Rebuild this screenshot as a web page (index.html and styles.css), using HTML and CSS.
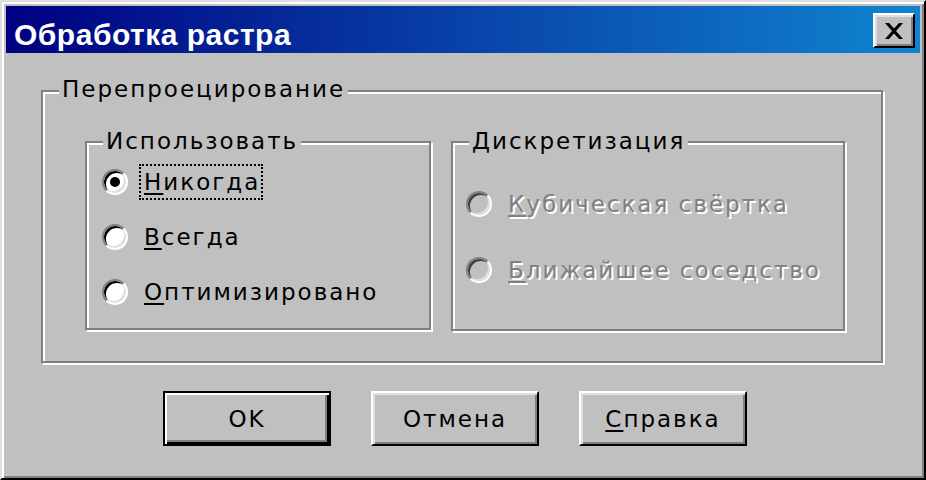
FILE: index.html
```html
<!DOCTYPE html>
<html lang="ru">
<head>
  <meta charset="UTF-8" />
  <meta name="viewport" content="width=device-width, initial-scale=1.0"/>
  <title>Обработка растра</title>
  <link rel="stylesheet" href="styles.css">
</head>
<body>
  <div class="window">
    <div class="titlebar">
      <span class="title">Обработка растра</span>
      <button class="close" aria-label="Закрыть">
        <svg width="18" height="16" viewBox="0 0 18 16">
          <polygon points="0,0 4,0 9,5.5 14,0 18,0 11,8 18,16 14,16 9,10.5 4,16 0,16 7,8" fill="#000"/>
        </svg>
      </button>
    </div>

    <div class="content">
      <div class="group outer">
        <span class="legend">Перепроецирование</span>

        <div class="group use">
          <span class="legend">Использовать</span>
          <label class="option">
            <span class="radio checked"><span class="dot"></span></span>
            <span class="caption focused"><u>Н</u>икогда</span>
          </label>
          <label class="option">
            <span class="radio"></span>
            <span class="caption"><u>В</u>сегда</span>
          </label>
          <label class="option">
            <span class="radio"></span>
            <span class="caption"><u>О</u>птимизировано</span>
          </label>
        </div>

        <div class="group sampling">
          <span class="legend">Дискретизация</span>
          <label class="option disabled">
            <span class="radio"></span>
            <span class="caption"><u>К</u>убическая свёртка</span>
          </label>
          <label class="option disabled">
            <span class="radio"></span>
            <span class="caption"><u>Б</u>лижайшее соседство</span>
          </label>
        </div>
      </div>

      <div class="actions">
        <button class="btn default">OK</button>
        <button class="btn">Отмена</button>
        <button class="btn"><u>С</u>правка</button>
      </div>
    </div>
  </div>
</body>
</html>
```

FILE: styles.css
```css
body {
  margin: 0;
  background-color: #c0c0c0;
  font-family: 'DejaVu Sans', sans-serif;
  font-size: 23px;
  color: #000;
}

.window {
  width: 926px;
  height: 480px;
  box-sizing: border-box;
  border: 2px solid;
  border-color: #dfdfdf #000 #000 #dfdfdf;
  box-shadow: inset 2px 2px #fff, inset -2px -2px #808080;
  padding: 4px;
  background-color: #c0c0c0;
  display: flex;
  flex-direction: column;
}

.titlebar {
  height: 47px;
  flex: none;
  display: flex;
  justify-content: space-between;
  align-items: flex-start;
  background: linear-gradient(to right, #000080, #1084d0);
  padding: 0 5px 0 8px;
}

.title {
  margin-top: 14px;
  font-family: 'Liberation Sans', sans-serif;
  font-weight: bold;
  font-size: 30px;
  line-height: 30px;
  letter-spacing: 0.5px;
  color: #fff;
}

.close {
  margin-top: 7px;
  width: 42px;
  height: 35px;
  padding: 0;
  border: 2px solid;
  border-color: #fff #000 #000 #fff;
  box-shadow: inset 2px 2px #dfdfdf, inset -2px -2px #808080;
  background-color: #c0c0c0;
  display: flex;
  align-items: center;
  justify-content: center;
}

.content {
  flex: 1;
  padding: 37px 37px 0 35px;
}

.group {
  position: relative;
  box-sizing: border-box;
  border: 2px solid #808080;
  box-shadow: inset 2px 2px #fff, 2px 2px #fff;
}

.legend {
  position: absolute;
  top: -14px;
  left: 16px;
  padding: 0 3px;
  line-height: 23px;
  letter-spacing: 2px;
  background-color: #c0c0c0;
  white-space: nowrap;
}

.outer {
  height: 273px;
  display: flex;
  gap: 20px;
  padding: 49px 36px 0 42px;
}

.use {
  width: 346px;
  height: 189px;
  padding: 21px 0 0 15px;
  display: flex;
  flex-direction: column;
  gap: 19px;
}

.use .legend {
  top: -13px;
}

.sampling {
  flex: 1;
  height: 190px;
  padding: 43px 0 0 13px;
  display: flex;
  flex-direction: column;
  gap: 30px;
}

.sampling .legend {
  top: -13px;
}

.option {
  height: 36px;
  display: flex;
  align-items: center;
  gap: 11px;
  letter-spacing: 2px;
  white-space: nowrap;
}

.radio {
  width: 26px;
  height: 26px;
  box-sizing: border-box;
  border-radius: 50%;
  border: 2px solid;
  border-color: #808080 #fff #fff #808080;
  background-color: #fff;
  box-shadow: inset 2px 2px #000, inset -2px -2px #dfdfdf;
  display: flex;
  align-items: center;
  justify-content: center;
  flex: none;
}

.dot {
  width: 10px;
  height: 10px;
  border-radius: 50%;
  background-color: #000;
}

.caption {
  padding: 2px 1px 2px 3px;
  border: 2px solid transparent;
  line-height: 28px;
}

.caption.focused {
  border: 2px dotted #000;
}

u {
  text-decoration-thickness: 2px;
  text-underline-offset: 3px;
}

.disabled .caption {
  color: #808080;
  text-shadow: 2px 2px 0 #fff;
}

.disabled .radio {
  background-color: #c0c0c0;
  box-shadow: inset 2px 2px #404040, inset -2px -2px #dfdfdf;
}

.actions {
  display: flex;
  gap: 40px;
  margin: 28px 0 0 122px;
}

.btn {
  width: 168px;
  height: 55px;
  font-family: 'DejaVu Sans', sans-serif;
  font-size: 23px;
  letter-spacing: 2px;
  color: #000;
  background-color: #c0c0c0;
  border: 2px solid;
  border-color: #fff #000 #000 #fff;
  box-shadow: inset 2px 2px #dfdfdf, inset -2px -2px #808080;
  padding: 0;
}

.btn.default {
  border: 2px solid #000;
  box-shadow: inset 2px 2px #fff, inset -2px -2px #000, inset -4px -4px #808080;
}
```
